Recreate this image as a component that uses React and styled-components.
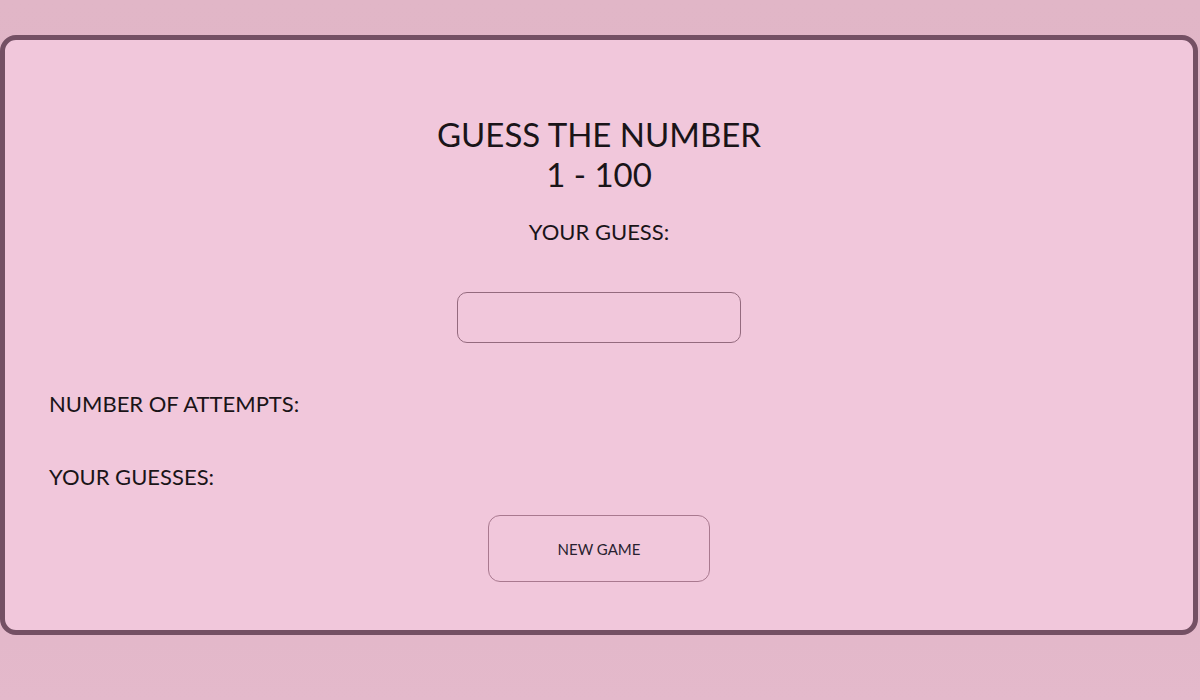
import styled, { createGlobalStyle } from "styled-components";

const GlobalStyle = createGlobalStyle`
  html, body {
    margin: 0;
    padding: 0;
  }
  body {
    min-height: 700px;
    background: linear-gradient(180deg, #e1b6c7 0%, #dfb3c5 50%, #e4b9cb 100%);
    font-family: Lato, "Open Sans", sans-serif;
    color: #1a1418;
  }
`;

const Page = styled.div`
  padding: 35px 2px 0 0;
`;

const Card = styled.main`
  height: 600px;
  box-sizing: border-box;
  background: #f1c7db;
  border: 5px solid #745064;
  border-radius: 16px;
  padding: 74px 44px 0;
  display: flex;
  flex-direction: column;
`;

const Title = styled.h1`
  margin: 0;
  text-align: center;
  font-weight: 400;
  font-size: 33px;
  line-height: 40px;
`;

const Label = styled.p`
  margin: ${({ $top }) => $top || 0}px 0 0;
  font-size: 22px;
  line-height: 28px;
  text-align: ${({ $center }) => ($center ? "center" : "left")};
`;

const GuessInput = styled.input`
  align-self: center;
  width: 284px;
  height: 51px;
  box-sizing: border-box;
  margin-top: 46px;
  background: transparent;
  border: 1px solid #946a7e;
  border-radius: 10px;
  font-family: inherit;
  font-size: 20px;
  outline: none;
`;

const Button = styled.button`
  align-self: center;
  width: 222px;
  height: 67px;
  margin-top: 24px;
  background: transparent;
  border: 1.5px solid #a9798f;
  border-radius: 12px;
  font-family: inherit;
  font-size: 15px;
  color: #2a1f30;
  cursor: pointer;
`;

export default function App() {
  return (
    <>
      <GlobalStyle />
      <Page>
        <Card>
          <Title>
            GUESS THE NUMBER
            <br />1 - 100
          </Title>
          <Label $center $top={24}>YOUR GUESS:</Label>
          <GuessInput type="text" />
          <Label $top={47}>NUMBER OF ATTEMPTS:</Label>
          <Label $top={45}>YOUR GUESSES:</Label>
          <Button>NEW GAME</Button>
        </Card>
      </Page>
    </>
  );
}
